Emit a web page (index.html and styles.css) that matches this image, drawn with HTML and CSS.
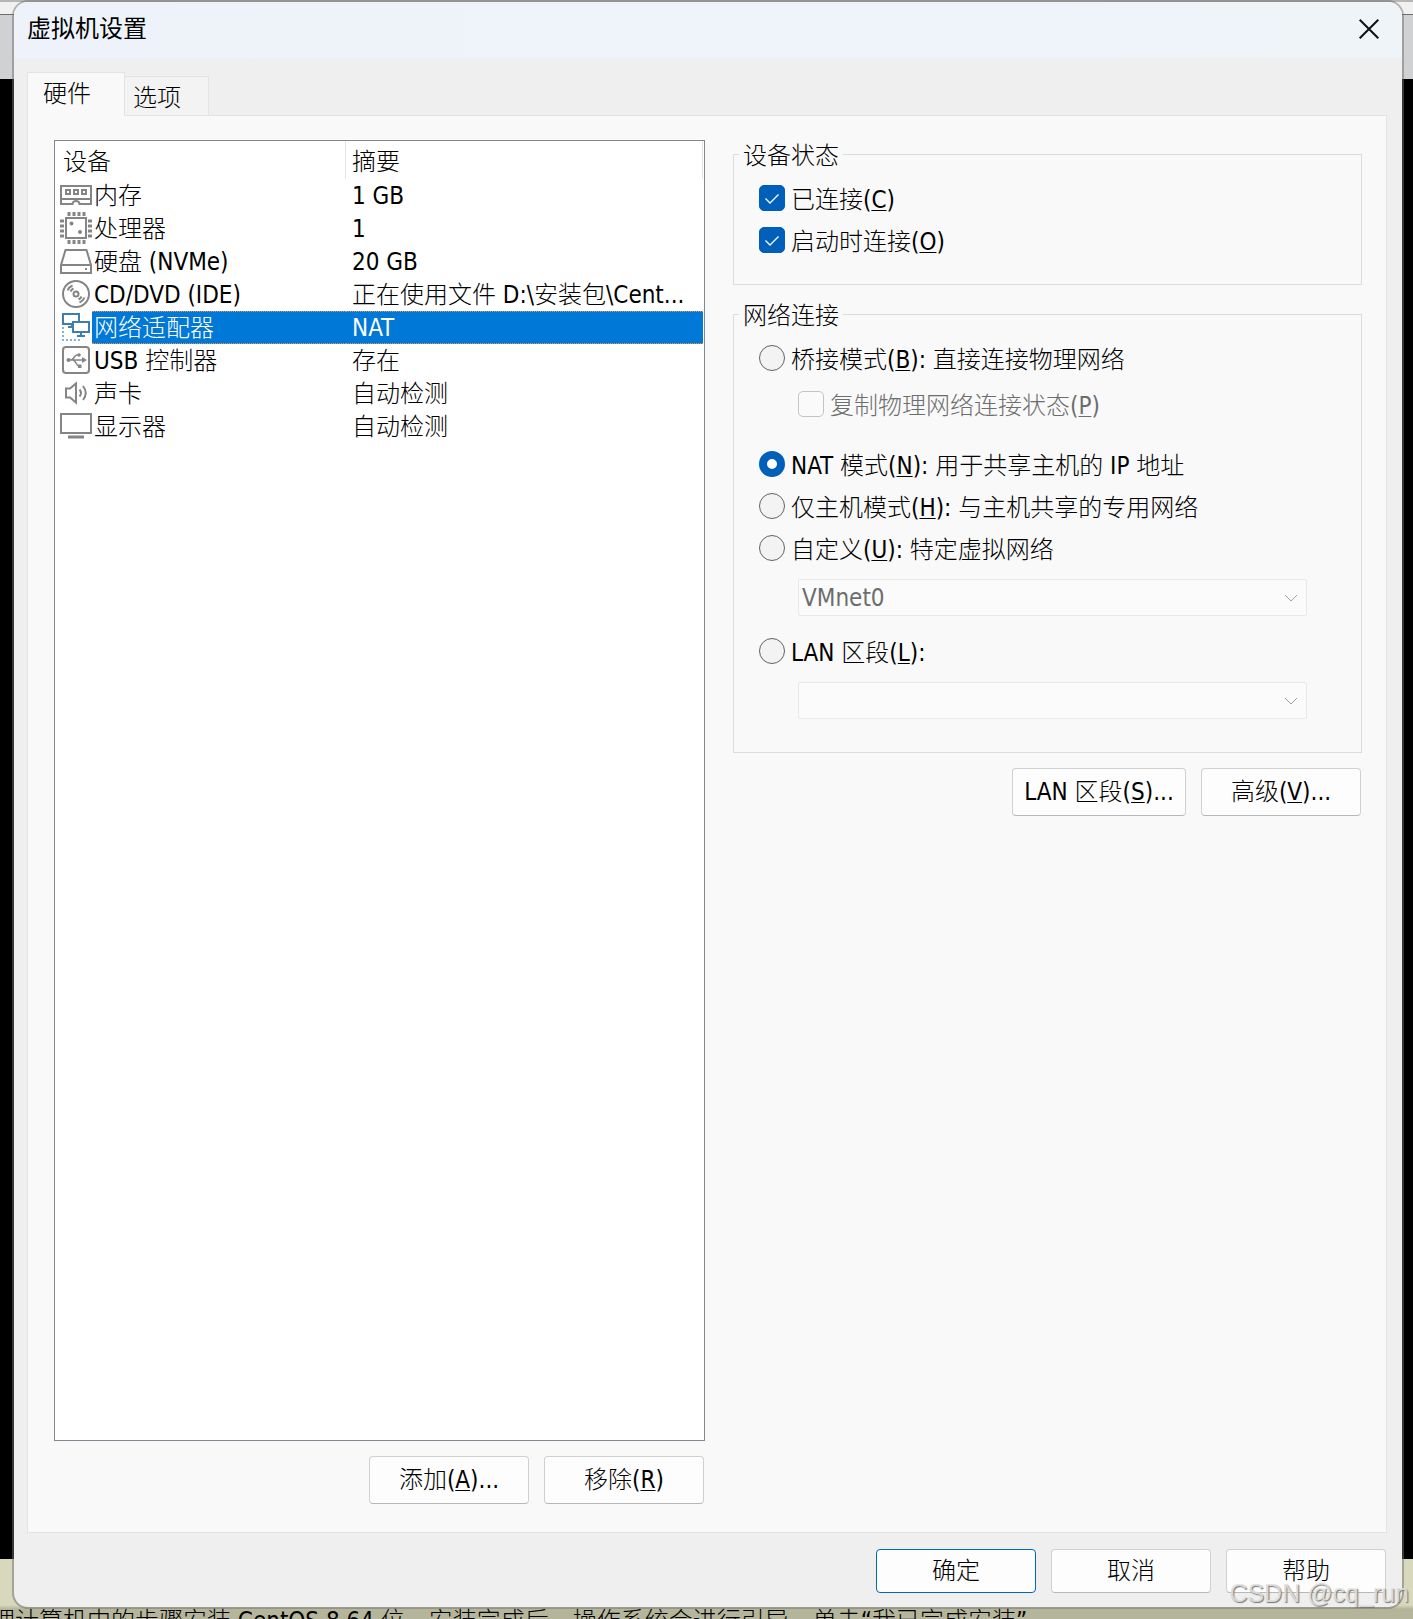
FILE: index.html
```html
<!DOCTYPE html>
<html lang="zh-CN">
<head>
<meta charset="utf-8">
<title>虚拟机设置</title>
<link rel="stylesheet" href="styles.css">
</head>
<body>
<div class="desktop">
  <div class="backdrop">
    <div class="host-menu"></div>
    <div class="host-toolbar"></div>
    <div class="host-console"></div>
    <div class="host-hint"><p class="hint-text">理计算机中的步骤安装 CentOS 8 64 位。安装完成后，操作系统会进行引导，单击“我已完成安装”</p></div>
  </div>

  <main class="dialog">
    <header class="title-bar">
      <h1 class="title">虚拟机设置</h1>
      <button class="close" type="button" aria-label="关闭">
        <svg width="20" height="20" viewBox="0 0 20 20"><path d="M0.7 0.7 19.3 19.3M19.3 0.7 0.7 19.3" fill="none" stroke="#111" stroke-width="2"/></svg>
      </button>
    </header>

    <div class="content">
      <div class="tabs" role="tablist">
        <button class="tab tab-active" type="button" role="tab" aria-selected="true">硬件</button>
        <button class="tab" type="button" role="tab" aria-selected="false">选项</button>
      </div>

      <div class="panel" role="tabpanel">
        <section class="hardware">
          <div class="device-list">
            <table class="devices">
              <colgroup><col class="col-icon"><col class="col-name"><col></colgroup>
              <thead>
                <tr><th colspan="2">设备</th><th>摘要</th></tr>
              </thead>
              <tbody>
                <tr>
                  <td class="icon"><svg viewBox="0 0 32 32"><path d="M1 7h30v18H19.500a3.500 3 0 0 0-7 0H1zM1 20h30M6 11h4v4H6zM14 11h4v4h-4zM22 11h4v4h-4z"/></svg></td>
                  <td>内存</td><td>1 GB</td>
                </tr>
                <tr>
                  <td class="icon"><svg viewBox="0 0 32 32"><path d="M6 6h20v20H6z"/><path stroke-width="4" stroke-dasharray="3 2" d="M7.500 2h18M7.500 30h18M2 7.500v18M30 7.500v18"/><circle class="solid" cx="11.500" cy="11.500" r="2"/><circle class="solid" cx="20" cy="20" r="2"/></svg></td>
                  <td>处理器</td><td>1</td>
                </tr>
                <tr>
                  <td class="icon"><svg viewBox="0 0 32 32"><path d="M5.500 5h21L31 20v8H1v-8zM1 20h30M25 24h2"/></svg></td>
                  <td>硬盘 (NVMe)</td><td>20 GB</td>
                </tr>
                <tr>
                  <td class="icon"><svg viewBox="0 0 32 32"><circle cx="16" cy="16" r="13"/><circle cx="16" cy="16" r="2.500"/><path d="M7.500 12.500a9 9 0 0 1 5-5M10.500 13.500a6 6 0 0 1 3-3M24.500 19.500a9 9 0 0 1-5 5M21.500 18.500a6 6 0 0 1-3 3"/></svg></td>
                  <td>CD/DVD (IDE)</td><td>正在使用文件 D:\安装包\Cent...</td>
                </tr>
                <tr class="selected">
                  <td class="icon"><svg class="network" viewBox="0 0 32 32"><path d="M12 13H3V3h16v8M13 11h16v10H13zM21 21v4M17 25h8M12 13v3M8 16h5"/><path class="dots" d="M3 16v14M2 29h18"/></svg></td>
                  <td>网络适配器</td><td>NAT</td>
                </tr>
                <tr>
                  <td class="icon"><svg viewBox="0 0 32 32"><rect x="3" y="3" width="26" height="26" rx="3"/><path stroke-width="1.600" d="M8 16h15M11 16c3 0 3-5 6-5h3M13 16c3 0 3 6 6 6h2"/><path class="solid" d="M22 13l5 3-5 3z"/><circle class="solid" cx="8.500" cy="16" r="2"/><circle class="solid" cx="19" cy="11" r="1.800"/><path class="solid" d="M18 20.500h3.500v3.500H18z"/></svg></td>
                  <td>USB 控制器</td><td>存在</td>
                </tr>
                <tr>
                  <td class="icon"><svg viewBox="0 0 32 32"><path d="M6 11.500h4l6-5v19l-6-5H6zM19.500 12.500q3 3.500 0 7M23 9q5.500 7 0 14"/></svg></td>
                  <td>声卡</td><td>自动检测</td>
                </tr>
                <tr>
                  <td class="icon"><svg viewBox="0 0 32 32"><path d="M1 4h30v19H1z"/><path stroke-width="3" d="M8 27h16"/></svg></td>
                  <td>显示器</td><td>自动检测</td>
                </tr>
              </tbody>
            </table>
          </div>
          <div class="actions">
            <button class="btn" type="button">添加(<u>A</u>)...</button>
            <button class="btn" type="button">移除(<u>R</u>)</button>
          </div>
        </section>

        <section class="details">
          <fieldset class="group group-status">
            <legend>设备状态</legend>
            <label class="option"><input type="checkbox" checked><span>已连接(<u>C</u>)</span></label>
            <label class="option"><input type="checkbox" checked><span>启动时连接(<u>O</u>)</span></label>
          </fieldset>

          <fieldset class="group group-network">
            <legend>网络连接</legend>
            <label class="option"><input type="radio" name="net"><span>桥接模式(<u>B</u>): 直接连接物理网络</span></label>
            <label class="option option-sub"><input type="checkbox" disabled><span>复制物理网络连接状态(<u>P</u>)</span></label>
            <label class="option"><input type="radio" name="net" checked><span>NAT 模式(<u>N</u>): 用于共享主机的 IP 地址</span></label>
            <label class="option"><input type="radio" name="net"><span>仅主机模式(<u>H</u>): 与主机共享的专用网络</span></label>
            <label class="option"><input type="radio" name="net"><span>自定义(<u>U</u>): 特定虚拟网络</span></label>
            <div class="combo">
              <select aria-label="特定虚拟网络" disabled><option>VMnet0</option></select>
              <svg class="chevron" viewBox="0 0 14 8"><path d="M1 1l6 6 6-6"/></svg>
            </div>
            <label class="option"><input type="radio" name="net"><span>LAN 区段(<u>L</u>):</span></label>
            <div class="combo">
              <select aria-label="LAN 区段" disabled><option></option></select>
              <svg class="chevron" viewBox="0 0 14 8"><path d="M1 1l6 6 6-6"/></svg>
            </div>
          </fieldset>

          <div class="actions">
            <button class="btn btn-wide" type="button">LAN 区段(<u>S</u>)...</button>
            <button class="btn" type="button">高级(<u>V</u>)...</button>
          </div>
        </section>
      </div>

      <footer class="footer">
        <button class="btn btn-default" type="button">确定</button>
        <button class="btn" type="button">取消</button>
        <button class="btn" type="button">帮助</button>
      </footer>
    </div>
  </main>
  <div class="watermark">CSDN @cq_run</div>
</div>
</body>
</html>
```

FILE: styles.css
```css
* {
  box-sizing: border-box;
}

body {
  margin: 0;
  font-family: "DejaVu Sans Condensed", "Noto Sans CJK SC", sans-serif;
  font-size: 24px;
  font-weight: 300;
  line-height: 32px;
  color: #000;
}

button,
select {
  font: inherit;
  color: inherit;
}

u {
  text-decoration-thickness: 1px;
  text-underline-offset: 2px;
}

/* The host window and the dialog share one grid cell. */
.desktop {
  position: relative;
  display: grid;
  grid-template: minmax(100vh, auto) / minmax(0, 1fr);
  overflow: hidden;
}

.backdrop,
.dialog {
  grid-area: 1 / 1;
}

.backdrop {
  display: flex;
  flex-direction: column;
  overflow: hidden;
}

.host-menu {
  height: 15px;
  background: linear-gradient(#b6b6b6 2px, #f1f1f1 2px);
  border-bottom: 1px solid #6c6c6c;
}

.host-toolbar {
  height: 64px;
  background: #d0d1d3;
}

.host-console {
  flex: 1;
  background: #000;
}

.host-hint {
  height: 60px;
  padding-top: 46px;
  overflow: hidden;
  background: linear-gradient(#d8d8bc 46px, #b5b59c 50px);
}

.hint-text {
  margin: 0 0 0 -9px;
  white-space: nowrap;
}

.dialog {
  display: flex;
  flex-direction: column;
  margin: 0 9px 10px 12px;
  border: 2px solid rgba(112, 112, 112, 0.5);
  border-radius: 16px;
  background: #efefef;
  background-clip: padding-box;
  overflow: hidden;
}

.title-bar {
  display: flex;
  align-items: center;
  justify-content: space-between;
  height: 56px;
  padding: 0 13px 2px;
  background: linear-gradient(90deg, #eef3fb, #eef4f8);
}

.title {
  margin: 0;
  font-size: 24px;
  font-weight: 400;
}

.close {
  display: grid;
  place-items: center;
  width: 40px;
  height: 40px;
  padding: 0;
  border: 0;
  background: none;
}

.content {
  display: flex;
  flex: 1;
  flex-direction: column;
  padding: 14px 15px 14px 13px;
}

.tabs {
  display: flex;
  align-items: flex-end;
}

.tab {
  height: 39px;
  padding: 3px 27px 0 8px;
  border: 1px solid #e3e3e3;
  border-width: 1px 1px 0 0;
  background: #f3f3f3;
}

.tab-active {
  z-index: 1;
  height: 44px;
  margin-bottom: -1px;
  padding: 0 33px 2px 15px;
  border-left-width: 1px;
  background: #f9f9f9;
}

.panel {
  display: grid;
  flex: 1;
  grid-template-columns: minmax(0, 651fr) minmax(0, 629fr);
  column-gap: 28px;
  padding: 24px 24px 28px 26px;
  border: 1px solid #e3e3e3;
  background: #f9f9f9;
}

.hardware {
  display: flex;
  flex-direction: column;
}

.device-list {
  flex: 1;
  padding-right: 1px;
  border: 1px solid #828790;
  background: #fff;
}

.devices {
  width: 100%;
  table-layout: fixed;
  border-collapse: separate;
  border-spacing: 0;
}

.col-icon {
  width: 37px;
}

.col-name {
  width: 254px;
}

.devices th {
  height: 38px;
  padding: 4px 8px 0;
  border-right: 1px solid #e5e5e5;
  font-weight: inherit;
  text-align: left;
}

.devices th:last-child {
  padding-left: 6px;
}

.devices td {
  height: 33px;
  padding: 2px 0 0 2px;
  line-height: 31px;
  white-space: nowrap;
}

.devices td:last-child {
  padding-left: 6px;
}

.devices td.icon {
  padding: 0 0 1px 5px;
}

.selected td:not(.icon) {
  border: 1px dotted #e8954a;
  border-width: 1px 0;
  background: #0078d7;
  color: #fff;
  line-height: 29px;
}

.icon svg {
  display: block;
  width: 32px;
  height: 32px;
  fill: none;
  stroke: #858585;
  stroke-width: 2;
}

.icon .solid {
  fill: #858585;
  stroke: none;
}

.icon .network {
  stroke: #3f7fb0;
}

.icon .dots {
  stroke: #7fb2dc;
  stroke-dasharray: 2 2;
}

.actions {
  display: flex;
  justify-content: flex-end;
  gap: 15px;
  padding: 15px 1px 0 0;
}

.btn {
  width: 160px;
  height: 48px;
  padding: 0;
  border: 1px solid #d0d0d0;
  border-bottom-color: #b8b8b8;
  border-radius: 4px;
  background: #fdfdfd;
}

.btn-wide {
  width: 174px;
}

.btn-default {
  border-color: #0067c0;
}

.group {
  min-width: 0;
  margin: 0;
  padding: 9px 54px 0 25px;
  border: 1px solid #dcdcdc;
}

.group legend {
  margin-left: -20px;
  padding: 4px 4px 0;
  line-height: 24px;
}

.group-status {
  margin-bottom: 15px;
  padding-bottom: 23px;
}

.group-network {
  padding-bottom: 33px;
}

.option {
  display: flex;
  align-items: center;
  gap: 6px;
  height: 42px;
}

.option span {
  padding-top: 3px;
}

.option-sub {
  margin: 4px 0 18px 39px;
  color: #6d6d6d;
}

.option input {
  flex: none;
  width: 26px;
  height: 26px;
  margin: 0;
  appearance: none;
  border: 1px solid #626262;
  border-radius: 5px;
  background: #f3f3f3;
}

.option input[type="radio"] {
  border-radius: 50%;
}

.option input[type="radio"]:checked {
  border: 8px solid #005fb8;
  background: #fff;
}

.option input[type="checkbox"]:checked {
  border-color: #005fb8;
  background: #005fb8 url("data:image/svg+xml,%3Csvg xmlns='http://www.w3.org/2000/svg' viewBox='0 0 24 24'%3E%3Cpath d='M5.500 12.500l4.500 4.500 8.500-8.500' fill='none' stroke='%23fff' stroke-width='1.300'/%3E%3C/svg%3E") center / 24px 24px;
}

.option input:disabled {
  border: 1px solid #c4c4c4;
  background: #fafafa;
}

.combo {
  position: relative;
  margin: 10px 0 14px 39px;
}

.combo:last-child {
  margin-bottom: 0;
}

.combo select {
  display: block;
  width: 100%;
  height: 37px;
  padding: 1px 3px 0;
  appearance: none;
  border: 1px solid #e8e8e8;
  border-radius: 2px;
  background: #fbfbfb;
  color: #6d6d6d;
  opacity: 1;
}

.chevron {
  position: absolute;
  top: 15px;
  right: 9px;
  width: 14px;
  height: 8px;
  fill: none;
  stroke: #a0a0a0;
  pointer-events: none;
}

.footer {
  display: flex;
  justify-content: flex-end;
  gap: 15px;
  padding: 16px 1px 0 0;
}

.footer .btn {
  height: 44px;
}

.watermark {
  position: absolute;
  right: 4px;
  bottom: 10px;
  font-family: "Liberation Sans", sans-serif;
  font-size: 25px;
  color: rgba(225, 225, 225, 0.9);
  text-shadow: 1px 1px 1px #777;
}
```
